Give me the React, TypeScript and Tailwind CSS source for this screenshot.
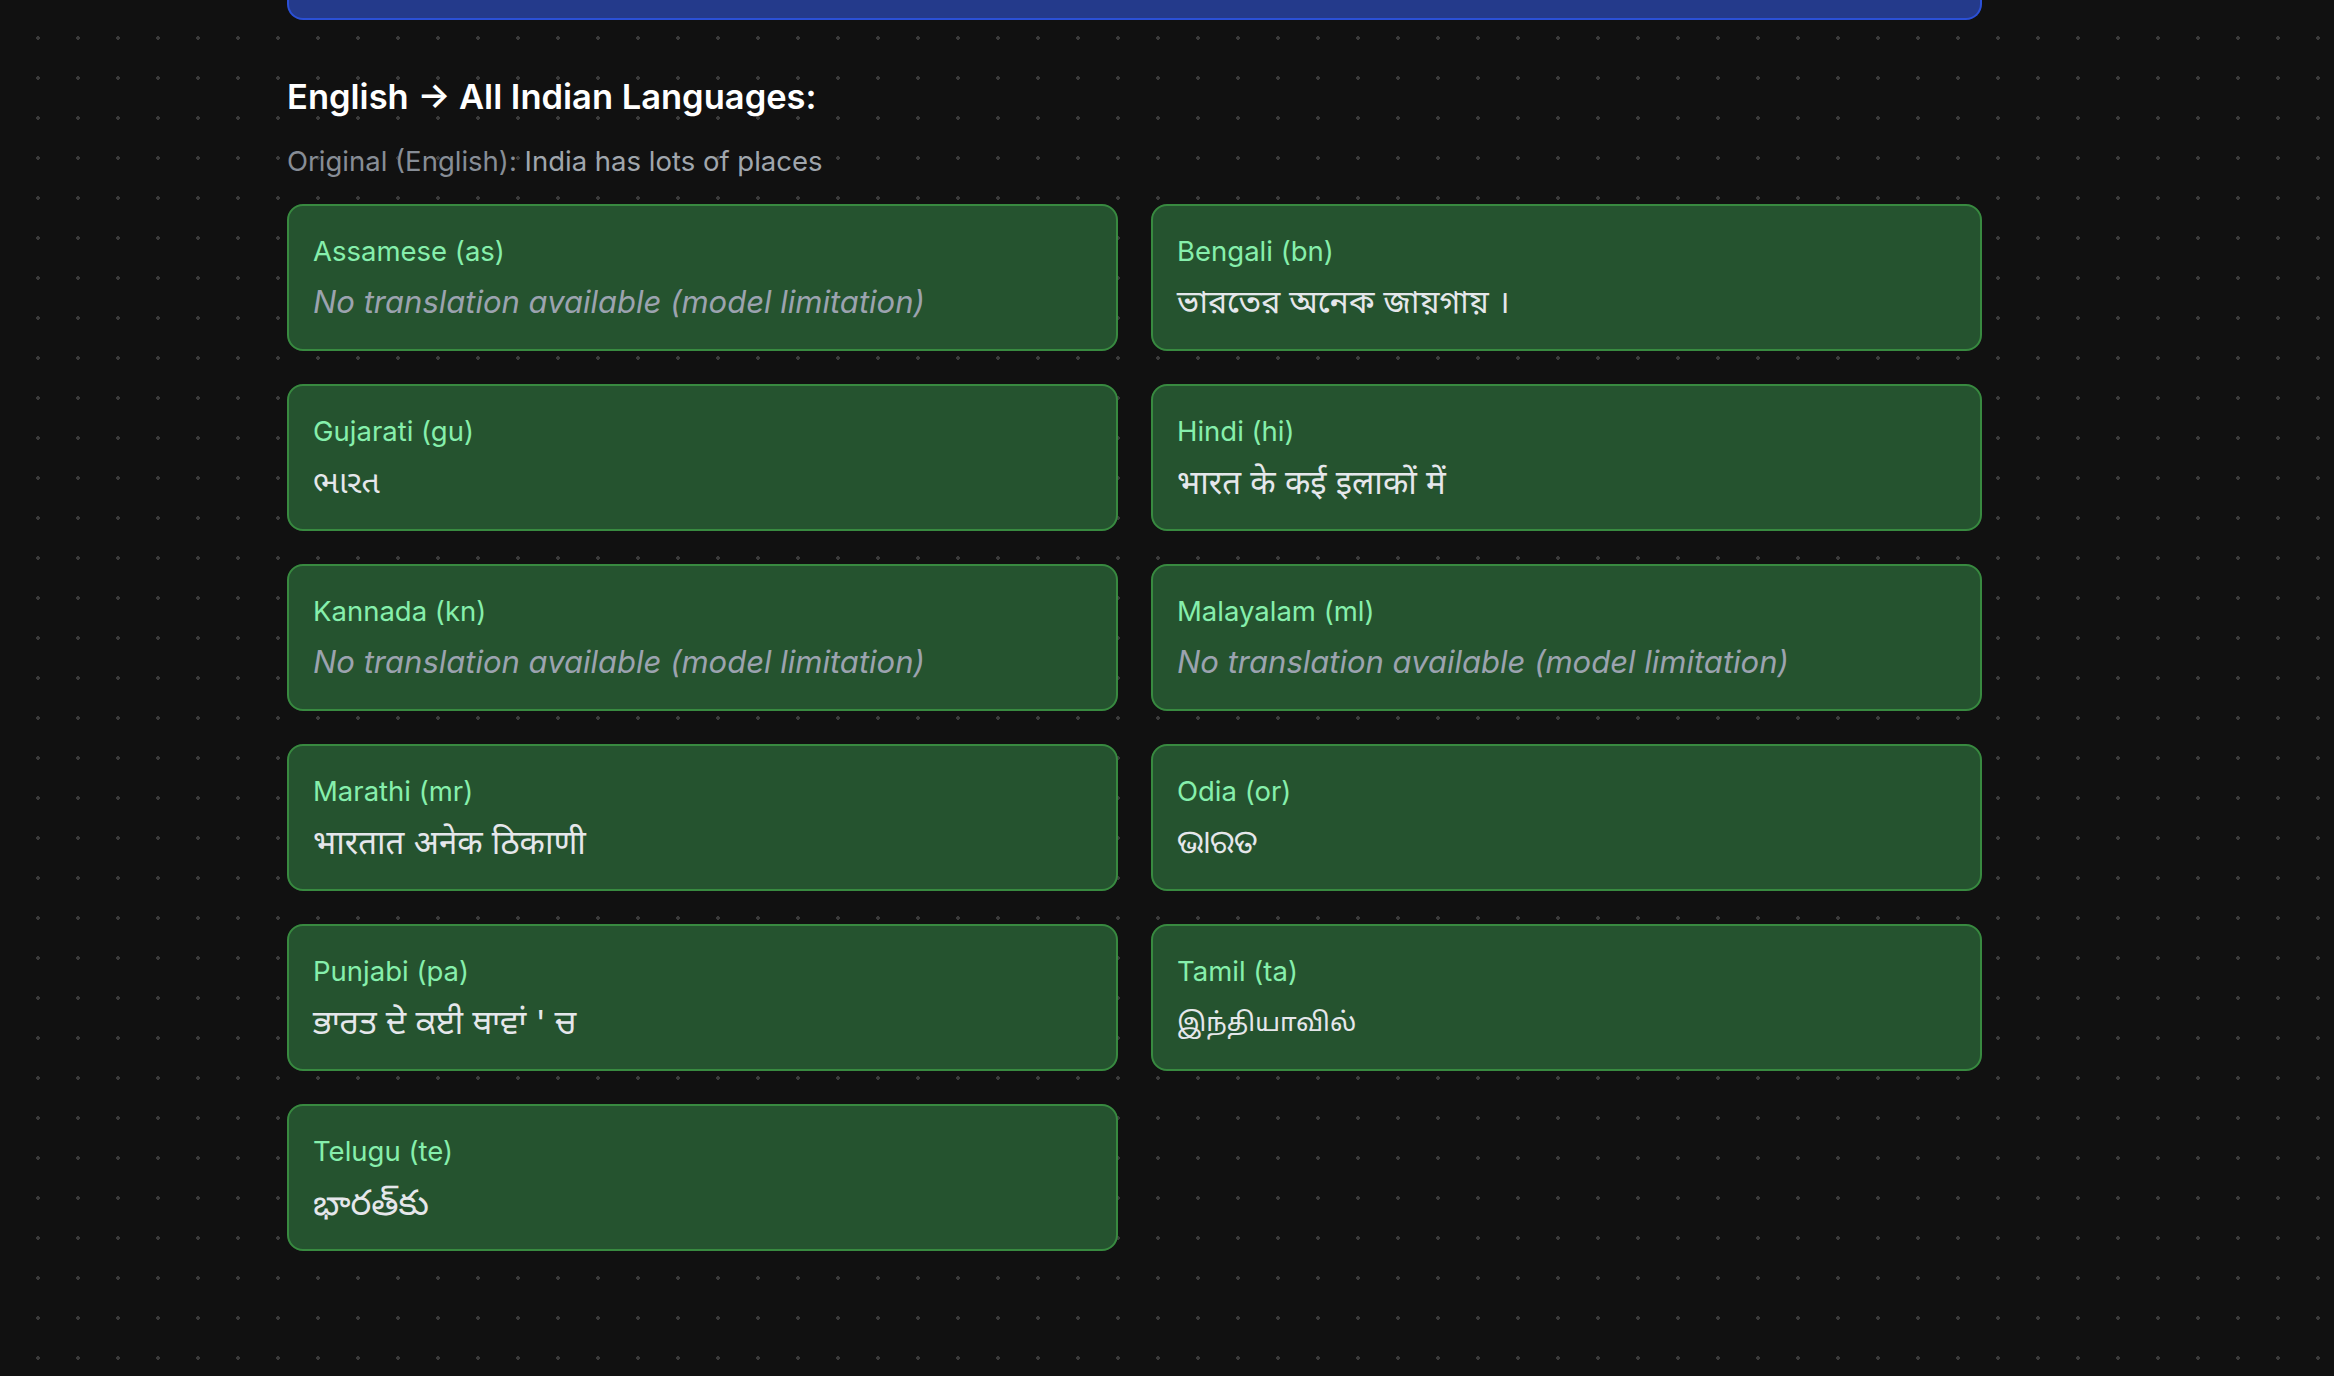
import React from 'react'

interface Translation {
  label: string
  text: string | null
  size?: string
}

// 翻译结果
const TRANSLATIONS: Translation[] = [
  { label: 'Assamese (as)', text: null },
  { label: 'Bengali (bn)', text: 'ভারতের অনেক জায়গায় ।', size: 'text-[32px]' },
  { label: 'Gujarati (gu)', text: 'ભારત', size: 'text-[32px]' },
  { label: 'Hindi (hi)', text: 'भारत के कई इलाकों में', size: 'text-[33px]' },
  { label: 'Kannada (kn)', text: null },
  { label: 'Malayalam (ml)', text: null },
  { label: 'Marathi (mr)', text: 'भारतात अनेक ठिकाणी', size: 'text-[33px]' },
  { label: 'Odia (or)', text: 'ଭାରତ', size: 'text-[32px]' },
  { label: 'Punjabi (pa)', text: 'ਭਾਰਤ ਦੇ ਕਈ ਥਾਵਾਂ \' ਚ', size: 'text-[33px]' },
  { label: 'Tamil (ta)', text: 'இந்தியாவில்', size: 'text-[26px]' },
  { label: 'Telugu (te)', text: 'భారత్‌కు', size: 'text-[35px]' }
]

const FONT =
  'font-[Inter,"Noto_Sans","Noto_Sans_Bengali","Noto_Sans_Devanagari","Noto_Sans_Gujarati","Noto_Sans_Oriya","Noto_Sans_Gurmukhi","Noto_Sans_Tamil","Noto_Sans_Telugu",sans-serif]'

function TranslationCard({ item }: { item: Translation }) {
  return (
    <div className="rounded-[16px] border-2 border-[#388a40] bg-[#25532f] px-[24px] pt-[25px] pb-[24px]">
      <div className="text-[27.5px] leading-[40px] text-[#86efac]">{item.label}</div>
      <div className="mt-[8px]">
        {item.text ? (
          <p className={`${item.size} leading-[46px] text-[#e5e7eb]`}>{item.text}</p>
        ) : (
          <p className="text-[31px] leading-[46px] italic text-[#9ca3af]">
            No translation available (model limitation)
          </p>
        )}
      </div>
    </div>
  )
}

export default function App() {
  return (
    <div
      className={`min-h-screen w-full bg-[#111111] bg-[image:radial-gradient(circle,#3b3b3b_1.6px,transparent_1.8px)] bg-[length:40px_40px] bg-[position:18px_18px] ${FONT}`}
    >
      <div className="ml-[287px] w-[1695px] pb-[125px]">
        {/* 上一个卡片的底边 */}
        <div className="h-[20px] rounded-b-[16px] border-2 border-t-0 border-[#2b50d6] bg-[#243a8b]" />

        <h2 className="mt-[57px] text-[34.5px] leading-[40px] font-semibold text-white">
          English → All Indian Languages:
        </h2>
        <p className="mt-[24px] text-[27.5px] leading-[40px]">
          <span className="text-[#878d96]">Original (English):</span>{' '}
          <span className="text-[#a0a6ad]">India has lots of places</span>
        </p>

        <div className="mt-[23px] grid grid-cols-2 gap-[33px]">
          {TRANSLATIONS.map((item) => (
            <TranslationCard key={item.label} item={item} />
          ))}
        </div>
      </div>
    </div>
  )
}
